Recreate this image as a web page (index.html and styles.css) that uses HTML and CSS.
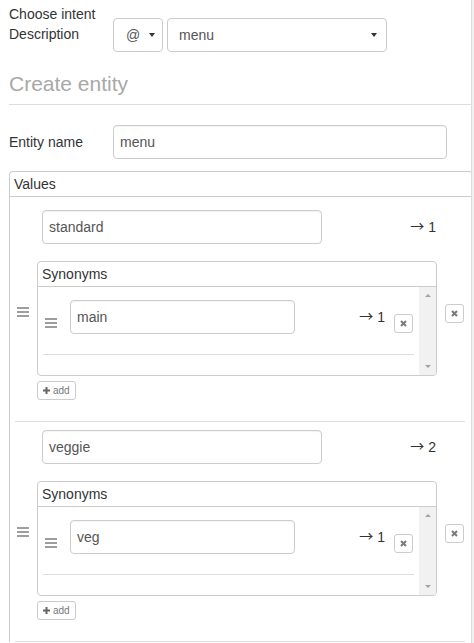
FILE: index.html
```html
<!DOCTYPE html>
<html>
<head>
<meta charset="utf-8">
<link rel="stylesheet" href="styles.css">
</head>
<body>
<div class="shell">
  <main class="page">
    <div class="intent-row">
      <div class="intent-label">Choose intent<br>Description</div>
      <div class="select sel-at"><span>@</span><span class="caret"></span></div>
      <div class="select sel-menu"><span>menu</span><span class="caret"></span></div>
    </div>

    <h3 class="section-title">Create entity</h3>

    <div class="field-row">
      <label class="field-label">Entity name</label>
      <div class="input entity-input">menu</div>
    </div>

    <div class="panel values-panel">
      <div class="panel-heading">Values</div>
      <div class="values-body">

        <div class="item value-item">
          <div class="handle-col outer-handle"><span class="handle"><i></i><i></i><i></i></span></div>
          <div class="item-main">
            <div class="item-row">
              <div class="input value-input">standard</div>
              <span class="maps"><span class="arr">→</span> 1</span>
            </div>
            <div class="panel syn-panel">
              <div class="panel-heading">Synonyms</div>
              <div class="syn-body">
                <div class="syn-list">
                  <div class="item syn-item">
                    <div class="handle-col inner-handle"><span class="handle"><i></i><i></i><i></i></span></div>
                    <div class="syn-main">
                      <div class="input syn-input">main</div>
                      <span class="maps"><span class="arr">→</span> 1</span>
                    </div>
                    <div class="remove-col inner-remove">
                      <button class="x-btn"><svg width="7" height="7" viewBox="0 0 7 7"><path d="M1 1L6 6M6 1L1 6" stroke="#7a7a7a" stroke-width="2" fill="none"/></svg></button>
                    </div>
                  </div>
                </div>
                <div class="fake-scroll"><span class="sc-up"></span><span class="sc-down"></span></div>
              </div>
            </div>
            <button class="add-btn"><svg width="7" height="7" viewBox="0 0 7 7"><path d="M2.5 0h2v7h-2zM0 2.5h7v2h-7z" fill="#666"/></svg><span>add</span></button>
          </div>
          <div class="remove-col outer-remove">
            <button class="x-btn"><svg width="7" height="7" viewBox="0 0 7 7"><path d="M1 1L6 6M6 1L1 6" stroke="#7a7a7a" stroke-width="2" fill="none"/></svg></button>
          </div>
        </div>

        <div class="item value-item">
          <div class="handle-col outer-handle"><span class="handle"><i></i><i></i><i></i></span></div>
          <div class="item-main">
            <div class="item-row">
              <div class="input value-input">veggie</div>
              <span class="maps"><span class="arr">→</span> 2</span>
            </div>
            <div class="panel syn-panel">
              <div class="panel-heading">Synonyms</div>
              <div class="syn-body">
                <div class="syn-list">
                  <div class="item syn-item">
                    <div class="handle-col inner-handle"><span class="handle"><i></i><i></i><i></i></span></div>
                    <div class="syn-main">
                      <div class="input syn-input">veg</div>
                      <span class="maps"><span class="arr">→</span> 1</span>
                    </div>
                    <div class="remove-col inner-remove">
                      <button class="x-btn"><svg width="7" height="7" viewBox="0 0 7 7"><path d="M1 1L6 6M6 1L1 6" stroke="#7a7a7a" stroke-width="2" fill="none"/></svg></button>
                    </div>
                  </div>
                </div>
                <div class="fake-scroll"><span class="sc-up"></span><span class="sc-down"></span></div>
              </div>
            </div>
            <button class="add-btn"><svg width="7" height="7" viewBox="0 0 7 7"><path d="M2.5 0h2v7h-2zM0 2.5h7v2h-7z" fill="#666"/></svg><span>add</span></button>
          </div>
          <div class="remove-col outer-remove">
            <button class="x-btn"><svg width="7" height="7" viewBox="0 0 7 7"><path d="M1 1L6 6M6 1L1 6" stroke="#7a7a7a" stroke-width="2" fill="none"/></svg></button>
          </div>
        </div>

      </div>
    </div>
  </main>
  <div class="gutter"></div>
</div>
</body>
</html>
```

FILE: styles.css
```css
* { box-sizing: border-box; }
html, body { margin: 0; padding: 0; background: #fff; }
body {
  font-family: "Liberation Sans", Arial, sans-serif;
  font-size: 14px;
  line-height: 20px;
  color: #333;
  overflow: hidden;
  height: 643px;
}
.shell { display: flex; height: 643px; }
.page {
  width: 471px;
  flex: none;
  padding-left: 9px;
  overflow: hidden;
}
.gutter {
  flex: 1;
  background: #f1f1f1;
  border-left: 1px solid #dcdcdc;
}

/* intent row */
.intent-row { display: flex; align-items: flex-start; }
.intent-label { width: 104px; margin-top: 4px; }
.select {
  margin-top: 18px;
  height: 34px;
  border: 1px solid #ccc;
  border-radius: 4px;
  display: flex;
  align-items: center;
  justify-content: space-between;
  color: #555;
  background: #fff;
}
.sel-at { width: 50px; padding: 0 7px 0 12px; margin-right: 4px; }
.sel-menu { width: 220px; padding: 0 9px 0 11px; }
.caret {
  width: 0; height: 0;
  border-top: 4px solid #333;
  border-left: 3px solid transparent;
  border-right: 3px solid transparent;
}

.section-title {
  margin: 20px 0 0;
  font-size: 21px;
  line-height: 23px;
  font-weight: normal;
  color: #a8a8a8;
  padding-bottom: 9px;
  border-bottom: 1px solid #ddd;
}

.field-row { display: flex; align-items: center; margin-top: 20px; }
.field-label { width: 104px; }

.input {
  height: 34px;
  border: 1px solid #ccc;
  border-radius: 4px;
  padding: 6px 6px;
  color: #555;
  background: #fff;
  box-shadow: inset 0 1px 1px rgba(0,0,0,0.05);
  white-space: nowrap;
}
.entity-input { width: 334px; }

/* panels */
.panel {
  border: 1px solid #ccc;
  border-radius: 4px;
  background: #fff;
}
.panel-heading {
  padding: 2px 4px;
  border-bottom: 1px solid #ccc;
  color: #333;
}
.values-panel {
  margin-top: 12px;
  margin-right: -2px;
  border-bottom: none;
  border-bottom-left-radius: 0;
  border-bottom-right-radius: 0;
}
.values-body { padding: 5px 7px 0 5px; }

.item { display: flex; border-bottom: 1px solid #ddd; }
.value-item { padding: 8px 0 21px; }

.handle-col { width: 22px; flex: none; }
.handle {
  display: flex;
  flex-direction: column;
  gap: 2px;
  width: 12px;
  margin-left: 2px;
}
.handle i { display: block; height: 2px; background: #9d9d9d; }
.outer-handle { padding-top: 97px; }
.inner-handle { padding-top: 18px; }

.item-main { width: 400px; flex: none; }
.item-row {
  display: flex;
  align-items: center;
  justify-content: space-between;
  padding: 0 1px 0 5px;
}
.value-input { width: 280px; }
.maps { color: #333; white-space: nowrap; line-height: 20px; }
.arr {
  font-family: "Noto Sans CJK SC", sans-serif;
  display: inline-block;
  line-height: 14px;
  vertical-align: 1px;
}

.remove-col { flex: 1; display: flex; align-items: flex-start; }
.outer-remove { padding: 94px 0 0 8px; }
.inner-remove { padding: 14px 0 0 9px; }
.x-btn {
  width: 19px;
  height: 19px;
  padding: 0;
  border: 1px solid #ccc;
  border-radius: 3px;
  background: #fff;
  display: flex;
  align-items: center;
  justify-content: center;
}
.x-btn svg { display: block; }

.syn-panel { margin-top: 17px; }
.syn-body { display: flex; height: 88px; }
.syn-list { flex: 1; padding: 5px 5px 0; }
.syn-item { padding: 8px 0 20px; }
.syn-main {
  width: 320px;
  flex: none;
  display: flex;
  align-items: center;
  justify-content: space-between;
  padding-left: 5px;
}
.syn-input { width: 225px; }

.fake-scroll {
  width: 17px;
  flex: none;
  background: #f1f1f1;
  border-bottom-right-radius: 3px;
  display: flex;
  flex-direction: column;
  justify-content: space-between;
  align-items: center;
  padding: 7px 0 7px;
}
.sc-up {
  width: 0; height: 0;
  border-bottom: 3px solid #a3a3a3;
  border-left: 3px solid transparent;
  border-right: 3px solid transparent;
}
.sc-down {
  width: 0; height: 0;
  border-top: 3px solid #a3a3a3;
  border-left: 3px solid transparent;
  border-right: 3px solid transparent;
}

.add-btn {
  margin-top: 5px;
  height: 19px;
  padding: 0 5px 0 5px;
  border: 1px solid #ccc;
  border-radius: 3px;
  background: #fff;
  display: flex;
  align-items: center;
  gap: 3px;
  font-family: "Liberation Sans", Arial, sans-serif;
  font-size: 10px;
  line-height: 15px;
  color: #777;
}
.add-btn svg { display: block; }
```
